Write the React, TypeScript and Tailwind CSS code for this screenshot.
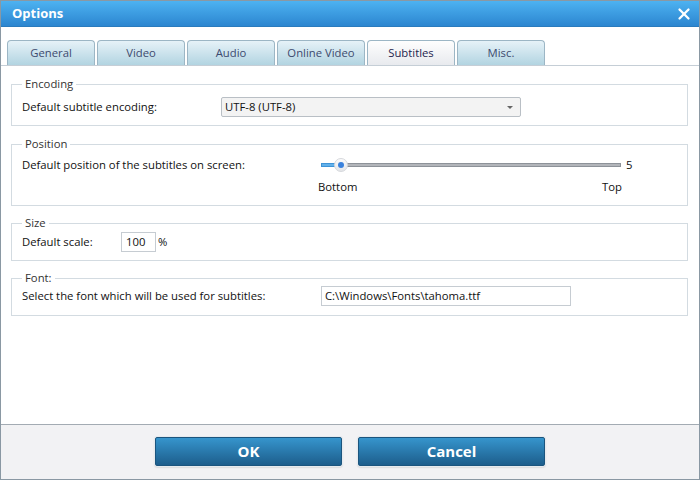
import { X } from 'lucide-react'

const tabs = ['General', 'Video', 'Audio', 'Online Video', 'Subtitles', 'Misc.']

function Group({ title, className, children }: { title: string; className?: string; children: React.ReactNode }) {
  return (
    <fieldset className={`ml-[10px] mr-[11px] border border-[#d3dbe1] px-[10px] ${className ?? ''}`}>
      <legend className="px-[3px] text-[11.3px] leading-[16px] text-[#333]">{title}</legend>
      {children}
    </fieldset>
  )
}

export default function App() {
  return (
    <div
      className="flex h-[480px] w-[700px] flex-col border border-[#8a98a3] bg-white text-[11.3px] text-[#111]"
      style={{ fontFamily: '"Open Sans", "Noto Sans", sans-serif' }}
    >
      {/* Title bar */}
      <div className="flex h-[26px] items-center justify-between border-b border-[#2a7bbd] bg-gradient-to-b from-[#4db2f1] to-[#2c86d0] pl-[11px] pr-[6px]">
        <span className="text-[13px] font-bold text-white">Options</span>
        <X size={18} strokeWidth={3} className="text-white" />
      </div>

      <div className="flex-1">
        {/* Tabs */}
        <div className="mt-[13px] flex gap-[2px] border-b border-[#c5ced6] pl-[6px]">
          {tabs.map(t => (
            <div
              key={t}
              className={`flex h-[25px] w-[88px] items-center justify-center rounded-t-[4px] border border-b-0 border-[#9cb6c5] text-[11.3px] ${
                t === 'Subtitles'
                  ? 'bg-gradient-to-b from-[#fefefe] to-[#e8eaee] text-[#1e1e4e]'
                  : 'bg-gradient-to-b from-[#e6f2f8] to-[#b2d4e1] text-[#3d4a6e]'
              }`}
            >
              {t}
            </div>
          ))}
        </div>

        <Group title="Encoding" className="mt-[10px] pb-[8px]">
          <div className="mt-[5px] flex h-[20px] items-center">
            <span className="w-[199px]">Default subtitle encoding:</span>
            <div className="flex h-[20px] w-[300px] items-center justify-between rounded-[2px] border border-[#b9bfc5] bg-[#f3f3f3] pl-[3px] pr-[7px]">
              <span>UTF-8 (UTF-8)</span>
              <span className="h-0 w-0 border-x-[3px] border-t-[3px] border-x-transparent border-t-[#666]" />
            </div>
          </div>
        </Group>

        <Group title="Position" className="mt-[10px] pb-[10px]">
          <div className="mt-[5px] flex h-[16px] items-center">
            <span className="w-[299px]">Default position of the subtitles on screen:</span>
            <div className="relative flex h-[16px] w-[300px] items-center">
              <div className="h-[4px] w-[20px] border border-[#3f93d6] bg-[#62b1ea]" />
              <div className="h-[4px] flex-1 border border-[#8d9299] bg-[#b2b5ba]" />
              <div className="absolute left-[13px] top-[1px] flex h-[14px] w-[14px] items-center justify-center rounded-full border border-[#d6d8dc] bg-gradient-to-b from-[#fbfbfb] to-[#e4e6e9]">
                <div className="h-[6px] w-[6px] rounded-full bg-[#3b82dc]" />
              </div>
            </div>
            <span className="ml-[5px]">5</span>
          </div>
          <div className="mt-[6px] flex h-[16px] w-[600px] items-center">
            <span className="ml-[296px]">Bottom</span>
            <span className="ml-auto">Top</span>
          </div>
        </Group>

        <Group title="Size" className="mt-[9px] pb-[8px]">
          <div className="mt-[1px] flex h-[20px] items-center">
            <span className="w-[99px]">Default scale:</span>
            <div className="flex h-[20px] w-[35px] items-center border border-[#c6ccd2] bg-white pl-[4px]">100</div>
            <span className="ml-[2px]">%</span>
          </div>
        </Group>

        <Group title="Font:" className="mt-[9px] pb-[9px]">
          <div className="flex h-[20px] items-center">
            <span className="w-[299px]">Select the font which will be used for subtitles:</span>
            <div className="flex h-[20px] w-[250px] items-center border border-[#c6ccd2] bg-white pl-[3px]">
              C:\Windows\Fonts\tahoma.ttf
            </div>
          </div>
        </Group>
      </div>

      {/* Footer */}
      <div className="flex h-[55px] justify-center gap-[16px] border-t border-[#a3abb3] bg-[#f2f2f4] pt-[12px]">
        {['OK', 'Cancel'].map(b => (
          <button
            key={b}
            className="h-[29px] w-[187px] rounded-[2px] border border-[#1b557e] bg-gradient-to-b from-[#3695cd] to-[#1d5e8c] text-[15px] font-bold text-white shadow-[0_0_0_1px_#e6eaee,0_1px_2px_rgba(0,0,0,0.3)]"
          >
            {b}
          </button>
        ))}
      </div>
    </div>
  )
}
